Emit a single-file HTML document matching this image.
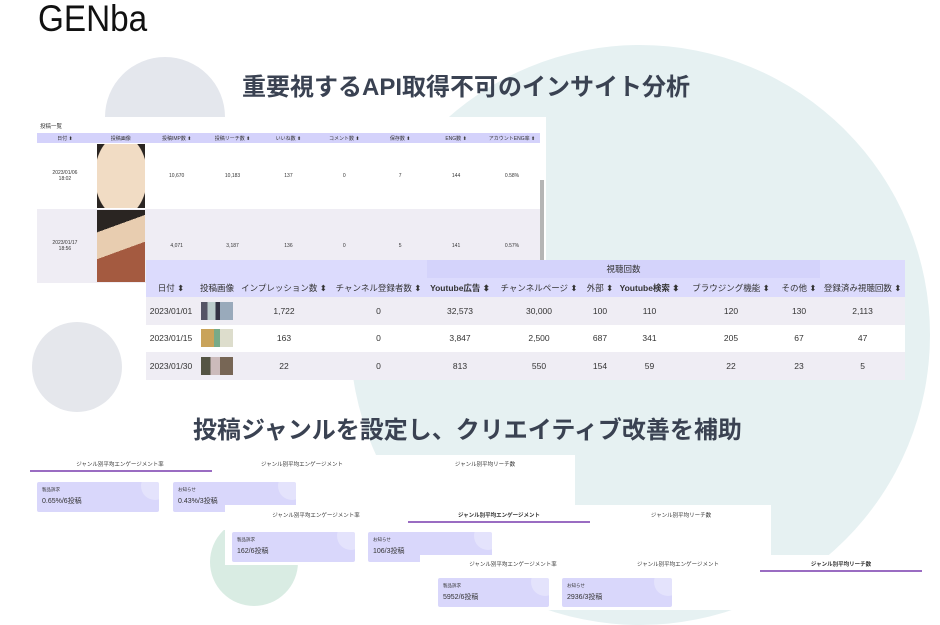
<!DOCTYPE html>
<html><head><meta charset="utf-8"><style>
*{margin:0;padding:0;box-sizing:border-box}
body{width:940px;height:624px;overflow:hidden;background:#fff;position:relative;font-family:"Liberation Sans","Noto Sans CJK JP",sans-serif;color:#333}
.a{position:absolute}
.h{font-weight:bold;color:#3a4252;font-size:24px;white-space:nowrap}
table{border-collapse:collapse;position:absolute;table-layout:fixed}
td,th{text-align:center;font-weight:normal;overflow:hidden;white-space:nowrap}
.t1{left:37px;top:133px;width:503px;font-size:5px}
.t1 th{background:#d4d2fb;height:10px}
.t2{left:146px;top:260px;width:759px;font-size:8.5px;color:#333}
.t2 th{background:#dcdbfd}
.t2 td{height:27.5px}
.r1{background:#efedf4}.r0{background:#fff}
.thumb{display:inline-block;width:32px;height:18px;background:linear-gradient(90deg,#556 0 20%,#bcc 20% 45%,#334 45% 60%,#9ab 60%);vertical-align:middle}
.panel{position:absolute;background:#fff}
.tab{position:absolute;font-size:5.5px;color:#333;text-align:center}
.ul{position:absolute;height:1.5px;background:#9a6cc2}
.card{position:absolute;background:#d9d7fb;border-radius:2px;overflow:hidden}
.card .s{position:absolute;left:5px;top:5px;font-size:4.5px}
.card .v{position:absolute;left:5px;top:14px;font-size:7px}
.card:after{content:"";position:absolute;right:-10px;top:-10px;width:28px;height:28px;border-radius:50%;background:rgba(255,255,255,.3)}
</style></head><body>
<div class="a" style="left:350px;top:45px;width:580px;height:580px;border-radius:50%;background:#e6f1f2"></div>
<div class="a" style="left:105px;top:57px;width:120px;height:200px;border-radius:60px 60px 0 0;background:#e4e7ed"></div>
<div class="a" style="left:32px;top:322px;width:90px;height:90px;border-radius:50%;background:#e5e7ec"></div>
<div class="a" style="left:210px;top:518px;width:88px;height:88px;border-radius:50%;background:#d9ece3"></div>
<div class="a" style="left:38px;top:-2px;font-size:37px;color:#111;transform:scaleX(0.9);transform-origin:left">GENba</div>
<div class="a h" style="left:242px;top:67px">重要視するAPI取得不可のインサイト分析</div>
<div class="a" style="left:28px;top:117px;width:518px;height:167px;background:#fff"></div>
<div class="a" style="left:40px;top:122px;font-size:5.5px">投稿一覧</div>
<table class="t1"><tr><th>日付 ⬍</th><th>投稿画像</th><th>投稿IMP数 ⬍</th><th>投稿リーチ数 ⬍</th><th>いいね数 ⬍</th><th>コメント数 ⬍</th><th>保存数 ⬍</th><th>ENG数 ⬍</th><th>アカウントENG率 ⬍</th></tr>
<tr class="r0" style="height:66px"><td>2023/01/06<br>18:02</td><td><div style="width:48px;height:64px;margin:auto;background:radial-gradient(ellipse 60% 70% at 50% 50%,#f1dcc4 90%,#2a2522 92%)"></div></td><td>10,670</td><td>10,183</td><td>137</td><td>0</td><td>7</td><td>144</td><td>0.58%</td></tr>
<tr class="r1" style="height:74px"><td>2023/01/17<br>18:56</td><td><div style="width:48px;height:72px;margin:auto;background:linear-gradient(160deg,#2a2522 25%,#e8cdb0 25% 55%,#a45a40 55%)"></div></td><td>4,071</td><td>3,187</td><td>136</td><td>0</td><td>5</td><td>141</td><td>0.57%</td></tr></table>
<div class="a" style="left:540px;top:180px;width:4px;height:80px;background:#b5b5b5"></div>
<table class="t2"><colgroup><col style="width:50px"><col style="width:42px"><col style="width:92px"><col style="width:97px"><col style="width:66px"><col style="width:92px"><col style="width:30px"><col style="width:69px"><col style="width:94px"><col style="width:42px"><col style="width:85px"></colgroup>
<tr style="height:18px"><th></th><th></th><th></th><th></th><th colspan="6" style="background:#d4d3fb">視聴回数</th><th></th></tr>
<tr style="height:19px"><th>日付 ⬍</th><th>投稿画像</th><th>インプレッション数 ⬍</th><th>チャンネル登録者数 ⬍</th><th><b>Youtube広告 ⬍</b></th><th>チャンネルページ ⬍</th><th>外部 ⬍</th><th><b>Youtube検索 ⬍</b></th><th>ブラウジング機能 ⬍</th><th>その他 ⬍</th><th>登録済み視聴回数 ⬍</th></tr>
<tr class="r1"><td>2023/01/01</td><td><span class="thumb"></span></td><td>1,722</td><td>0</td><td>32,573</td><td>30,000</td><td>100</td><td>110</td><td>120</td><td>130</td><td>2,113</td></tr>
<tr class="r0"><td>2023/01/15</td><td><span class="thumb" style="background:linear-gradient(90deg,#c9a35a 0 40%,#7a8 40% 60%,#ddc 60%)"></span></td><td>163</td><td>0</td><td>3,847</td><td>2,500</td><td>687</td><td>341</td><td>205</td><td>67</td><td>47</td></tr>
<tr class="r1"><td>2023/01/30</td><td><span class="thumb" style="background:linear-gradient(90deg,#554 0 30%,#cbb 30% 60%,#765 60%)"></span></td><td>22</td><td>0</td><td>813</td><td>550</td><td>154</td><td>59</td><td>22</td><td>23</td><td>5</td></tr></table>
<div class="a h" style="left:193px;top:410px">投稿ジャンルを設定し、クリエイティブ改善を補助</div>

<div class="panel" style="left:20px;top:455px;width:555px;height:75px"></div>
<div class="tab" style="left:30px;top:460px;width:180px">ジャンル別平均エンゲージメント率</div><div class="ul" style="left:30px;top:470px;width:182px"></div>
<div class="tab" style="left:212px;top:460px;width:180px">ジャンル別平均エンゲージメント</div>
<div class="tab" style="left:395px;top:460px;width:180px">ジャンル別平均リーチ数</div>
<div class="card" style="left:37px;top:482px;width:122px;height:30px"><div class="s">製品訴求</div><div class="v">0.65%/6投稿</div></div>
<div class="card" style="left:173px;top:482px;width:123px;height:30px"><div class="s">お知らせ</div><div class="v">0.43%/3投稿</div></div>

<div class="panel" style="left:225px;top:505px;width:546px;height:60px"></div>
<div class="tab" style="left:225px;top:511px;width:182px">ジャンル別平均エンゲージメント率</div>
<div class="tab" style="left:408px;top:511px;width:182px;font-weight:bold">ジャンル別平均エンゲージメント</div><div class="ul" style="left:408px;top:521px;width:182px"></div>
<div class="tab" style="left:590px;top:511px;width:182px">ジャンル別平均リーチ数</div>
<div class="card" style="left:232px;top:532px;width:123px;height:30px"><div class="s">製品訴求</div><div class="v">162/6投稿</div></div>
<div class="card" style="left:368px;top:532px;width:124px;height:30px"><div class="s">お知らせ</div><div class="v">106/3投稿</div></div>

<div class="panel" style="left:420px;top:555px;width:520px;height:55px"></div>
<div class="tab" style="left:425px;top:560px;width:176px">ジャンル別平均エンゲージメント率</div>
<div class="tab" style="left:590px;top:560px;width:176px">ジャンル別平均エンゲージメント</div>
<div class="tab" style="left:760px;top:560px;width:162px;font-weight:bold">ジャンル別平均リーチ数</div><div class="ul" style="left:760px;top:570px;width:162px"></div>
<div class="card" style="left:438px;top:578px;width:111px;height:29px"><div class="s">製品訴求</div><div class="v">5952/6投稿</div></div>
<div class="card" style="left:562px;top:578px;width:110px;height:29px"><div class="s">お知らせ</div><div class="v">2936/3投稿</div></div>
</body></html>
